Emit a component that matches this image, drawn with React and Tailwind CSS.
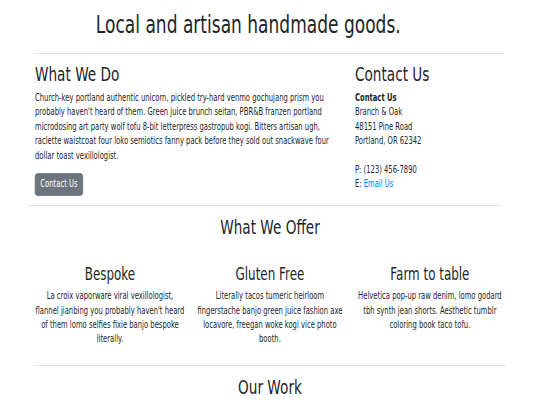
export default function App() {
  const offers = [
    {
      t: "Bespoke",
      p: "La croix vaporware viral vexillologist, flannel jianbing you probably haven't heard of them lomo selfies fixie banjo bespoke literally.",
    },
    {
      t: "Gluten Free",
      p: "Literally tacos tumeric heirloom fingerstache banjo green juice fashion axe locavore, freegan woke kogi vice photo booth.",
    },
    {
      t: "Farm to table",
      p: "Helvetica pop-up raw denim, lomo godard tbh synth jean shorts. Aesthetic tumblr coloring book taco tofu.",
    },
  ];
  return (
    <div className="w-[540px] h-[405px] overflow-hidden bg-white">
      <div className="w-[760.5px] origin-top-left [transform:scaleX(0.71)] text-[#212529] font-['DejaVu_Sans',sans-serif]">
        <header className="pt-[11px] pl-[135px]">
          <h1 className="text-[24px] leading-[28.8px] font-normal">Local and artisan handmade goods.</h1>
        </header>
        <hr className="ml-[48px] w-[663px] mt-[13px] border-t border-[#e5e5e5]" />
        <section className="flex ml-[49.3px] mt-[9.6px]">
          <div className="w-[450.7px] pr-[21px]">
            <h2 className="text-[19.2px] leading-[23px] mb-[4.6px]">What We Do</h2>
            <p className="text-[9.6px] leading-[14.4px]">
              Church-key portland authentic unicorn, pickled try-hard venmo gochujang prism you probably haven't heard of them. Green juice brunch seitan, PBR&amp;B franzen portland microdosing art party wolf tofu 8-bit letterpress gastropub kogi. Bitters artisan ugh, raclette waistcoat four loko semiotics fanny pack before they sold out snackwave four dollar toast vexillologist.
            </p>
            <button className="mt-[9.6px] bg-[#6c757d] border border-[#6c757d] text-white text-[9.6px] leading-[14.4px] px-[6.5px] py-[3.4px] rounded-[4px]">
              Contact Us
            </button>
          </div>
          <div className="flex-1">
            <h2 className="text-[19.2px] leading-[23px] mb-[4.6px]">Contact Us</h2>
            <div className="text-[9.6px] leading-[14.4px]">
              <div className="font-bold">Contact Us</div>
              <div>Branch &amp; Oak</div>
              <div>48151 Pine Road</div>
              <div>Portland, OR 62342</div>
              <div className="h-[14.4px]"></div>
              <div>P: (123) 456-7890</div>
              <div>
                E: <span className="text-[#007bff]">Email Us</span>
              </div>
            </div>
          </div>
        </section>
        <hr className="ml-[40.8px] w-[665px] mt-[9.6px] border-t border-[#e5e5e5]" />
        <section className="w-[676px] mx-auto mt-[9.6px]">
          <h2 className="text-[19.2px] leading-[23px] text-center">What We Offer</h2>
          <div className="flex mt-[24.6px]">
            {offers.map((o) => (
              <div key={o.t} className="w-[225.3px] px-[7px] text-center">
                <h3 className="text-[16.8px] leading-[20.2px] mb-[5.4px]">{o.t}</h3>
                <p className="text-[9.6px] leading-[14.4px]">{o.p}</p>
              </div>
            ))}
          </div>
        </section>
        <hr className="ml-[48px] w-[665px] mt-[18.6px] border-t border-[#e5e5e5]" />
        <section className="mt-[9.6px]">
          <h2 className="text-[19.2px] leading-[23px] text-center">Our Work</h2>
        </section>
      </div>
    </div>
  );
}
